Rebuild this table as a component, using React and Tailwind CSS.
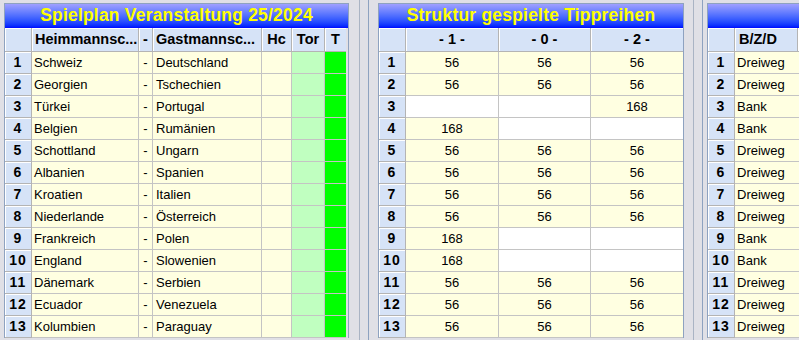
import React from 'react'

const spiele = [
    ["Schweiz", "Deutschland"],
    ["Georgien", "Tschechien"],
    ["Türkei", "Portugal"],
    ["Belgien", "Rumänien"],
    ["Schottland", "Ungarn"],
    ["Albanien", "Spanien"],
    ["Kroatien", "Italien"],
    ["Niederlande", "Österreich"],
    ["Frankreich", "Polen"],
    ["England", "Slowenien"],
    ["Dänemark", "Serbien"],
    ["Ecuador", "Venezuela"],
    ["Kolumbien", "Paraguay"],
]

// each row: [tipp 1, tipp 0, tipp 2] - empty string = white cell
const struktur = [
    ["56", "56", "56"],
    ["56", "56", "56"],
    ["", "", "168"],
    ["168", "", ""],
    ["56", "56", "56"],
    ["56", "56", "56"],
    ["56", "56", "56"],
    ["56", "56", "56"],
    ["168", "", ""],
    ["168", "", ""],
    ["56", "56", "56"],
    ["56", "56", "56"],
    ["56", "56", "56"],
]

const bzd = ["Dreiweg", "Dreiweg", "Bank", "Bank", "Dreiweg", "Dreiweg", "Dreiweg", "Dreiweg", "Bank", "Bank", "Dreiweg", "Dreiweg", "Dreiweg"]

const head = "h-[24px] flex items-center bg-[#d6e3f7] shadow-[inset_1px_1px_0_#ffffff] border-b border-[#b4b4b4] text-[14.5px] font-bold text-black"
const nr = "h-[22px] flex items-center justify-center bg-[#d6e3f7] shadow-[inset_1px_1px_0_#ffffff] border-r border-b border-[#b4b4b4] text-[14px] font-bold tracking-[1px] text-black"
const cell = "h-[22px] flex items-center border-b border-[#c4c4c4] text-[13px] text-black"

const Titel = ({ text }) => (
    <div className="h-[24px] flex items-center justify-center bg-linear-to-b from-[#a0a0ff] to-[#0000ff]">
        <span className="text-[17.5px] font-bold tracking-[0.2px] text-[#ffff00] leading-none">{text}</span>
    </div>
)

const Splitter = ({ a, b, c }) => (
    <div className={`h-[340px] flex shrink-0 ${a}`}>
        <div className="w-px h-full bg-[#aab4c4]"></div>
        <div className={`${b} h-full`}></div>
        <div className="w-px h-full bg-[#8ea2c0]"></div>
        <div className={`${c} h-full`}></div>
    </div>
)

const App = () => {
    return (
        <div className="w-[799px] h-[340px] overflow-hidden bg-[#e0e0e6] flex pl-[4px] font-['Liberation_Sans',Arial,sans-serif]">
            {/* Spielplan */}
            <div className="mt-[3px] w-[345px] shrink-0 border-l border-t border-r border-[#8ea2c0] self-start">
                <Titel text="Spielplan Veranstaltung 25/2024" />
                <div className="grid grid-cols-[27px_107px_14px_109px_30px_33px_21px]">
                    <div className={`${head} border-r`}></div>
                    <div className={`${head} border-r pl-[3px]`}>Heimmannsc...</div>
                    <div className={`${head} border-r justify-center`}>-</div>
                    <div className={`${head} border-r pl-[3px]`}>Gastmannsc...</div>
                    <div className={`${head} border-r justify-center`}>Hc</div>
                    <div className={`${head} border-r justify-center`}>Tor</div>
                    <div className={`${head} justify-center`}>T</div>
                    {spiele.map((s, i) => (
                        <React.Fragment key={"sp" + i}>
                            <div className={nr}>{i + 1}</div>
                            <div className={`${cell} border-r bg-[#ffffe1] pl-[2px]`}>{s[0]}</div>
                            <div className={`${cell} border-r bg-[#ffffe1] justify-center`}>-</div>
                            <div className={`${cell} border-r bg-[#ffffe1] pl-[3px]`}>{s[1]}</div>
                            <div className={`${cell} border-r bg-[#ffffe1]`}></div>
                            <div className={`${cell} border-r bg-[#c0ffc0]`}></div>
                            <div className={`${cell} bg-[#00ff00]`}></div>
                        </React.Fragment>
                    ))}
                </div>
            </div>

            <Splitter a="pl-[10px]" b="w-[8px]" c="w-[9px]" />

            {/* Struktur */}
            <div className="mt-[3px] w-[306px] shrink-0 border-l border-t border-r border-[#8ea2c0] self-start">
                <Titel text="Struktur gespielte Tippreihen" />
                <div className="grid grid-cols-[27px_93px_92px_92px]">
                    <div className={`${head} border-r`}></div>
                    <div className={`${head} border-r justify-center`}>- 1 -</div>
                    <div className={`${head} border-r justify-center`}>- 0 -</div>
                    <div className={`${head} justify-center`}>- 2 -</div>
                    {struktur.map((r, i) => (
                        <React.Fragment key={"st" + i}>
                            <div className={nr}>{i + 1}</div>
                            {r.map((v, j) => (
                                <div
                                    key={"v" + j}
                                    className={`${cell} justify-center ${j < 2 ? 'border-r' : ''} ${v ? 'bg-[#ffffe1]' : 'bg-white'}`}
                                >
                                    {v}
                                </div>
                            ))}
                        </React.Fragment>
                    ))}
                </div>
            </div>

            <Splitter a="pl-[9px]" b="w-[8px]" c="w-[4px]" />

            {/* B/Z/D */}
            <div className="mt-[3px] w-[120px] shrink-0 border-l border-t border-[#8ea2c0] self-start">
                <div className="h-[24px] bg-linear-to-b from-[#a0a0ff] to-[#0000ff]"></div>
                <div className="grid grid-cols-[27px_63px_30px]">
                    <div className={`${head} border-r`}></div>
                    <div className={`${head} border-r pl-[4px]`}>B/Z/D</div>
                    <div className={head}></div>
                    {bzd.map((v, i) => (
                        <React.Fragment key={"b" + i}>
                            <div className={nr}>{i + 1}</div>
                            <div className={`${cell} bg-[#ffffe1] pl-[2px]`}>{v}</div>
                            <div className={`${cell} bg-[#ffffe1]`}></div>
                        </React.Fragment>
                    ))}
                </div>
            </div>
        </div>
    )
}

export default App
